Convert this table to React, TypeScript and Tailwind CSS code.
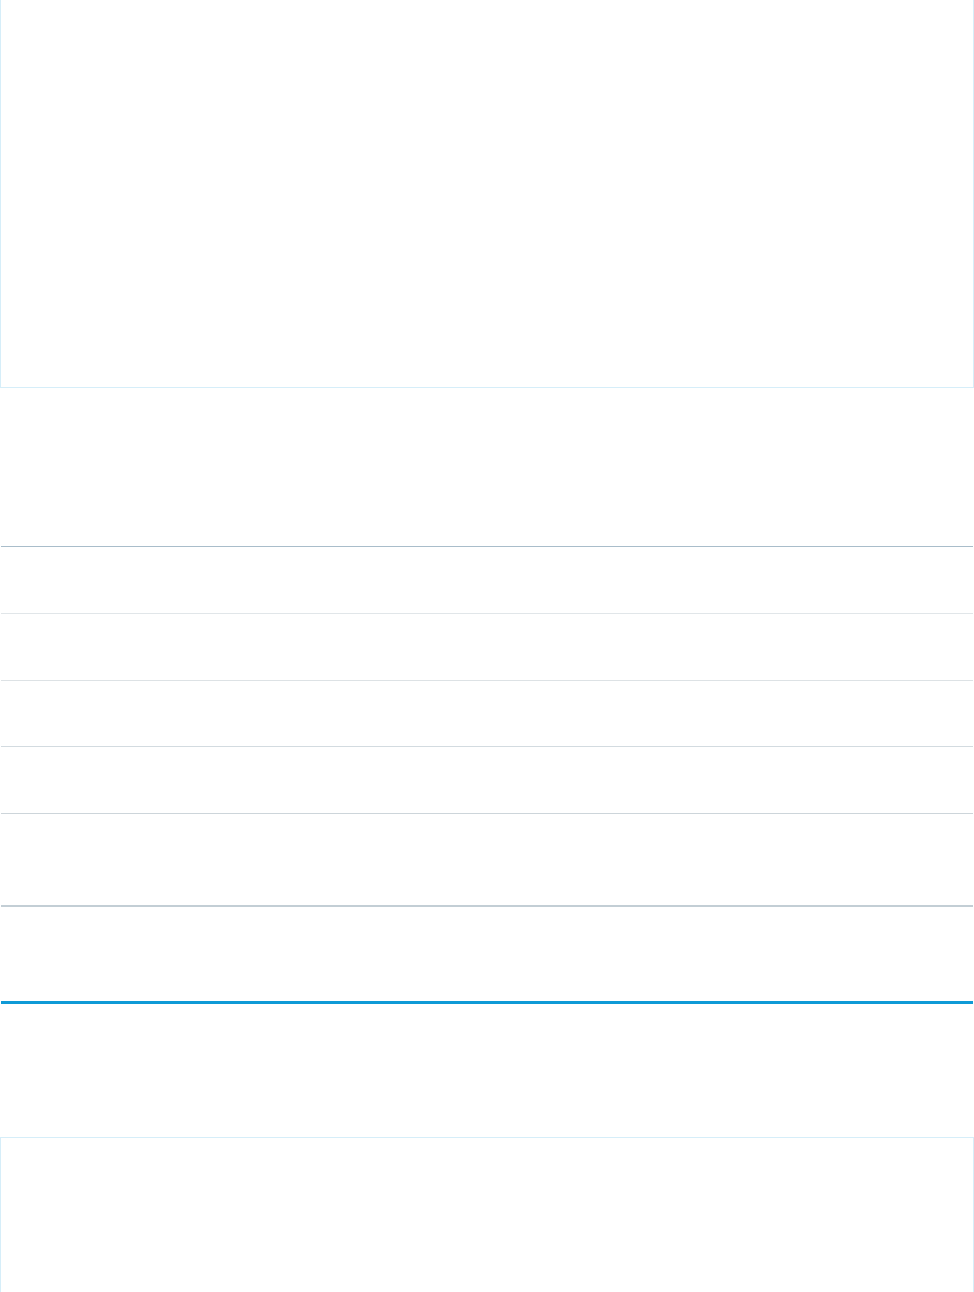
export default function App() {
  return (
    <div className="w-[974px] h-[1292px] bg-white overflow-hidden flex flex-col" style={{ fontFamily: '"Liberation Sans", Arial, sans-serif' }}>
      <div className="h-[388px] shrink-0 border-l border-r border-b border-[#d6eef9]" />
      <div className="h-[158px] shrink-0" />
      <div className="mx-[1px] flex flex-col">
        <div className="h-[67px] border-t border-[#a9bdca]" />
        <div className="h-[67px] border-t border-[#e1e6e9]" />
        <div className="h-[66px] border-t border-[#dde2e5]" />
        <div className="h-[67px] border-t border-[#d3dbe0]" />
        <div className="h-[92px] border-t border-[#cdd5da]" />
        <div className="h-[96px] border-t-2 border-[#c3ced5]" />
        <div className="h-[3px] bg-[#0f9ad6]" />
      </div>
      <div className="h-[133px] shrink-0" />
      <div className="flex-1 border-l border-r border-t border-[#d6eef9]" />
    </div>
  );
}
